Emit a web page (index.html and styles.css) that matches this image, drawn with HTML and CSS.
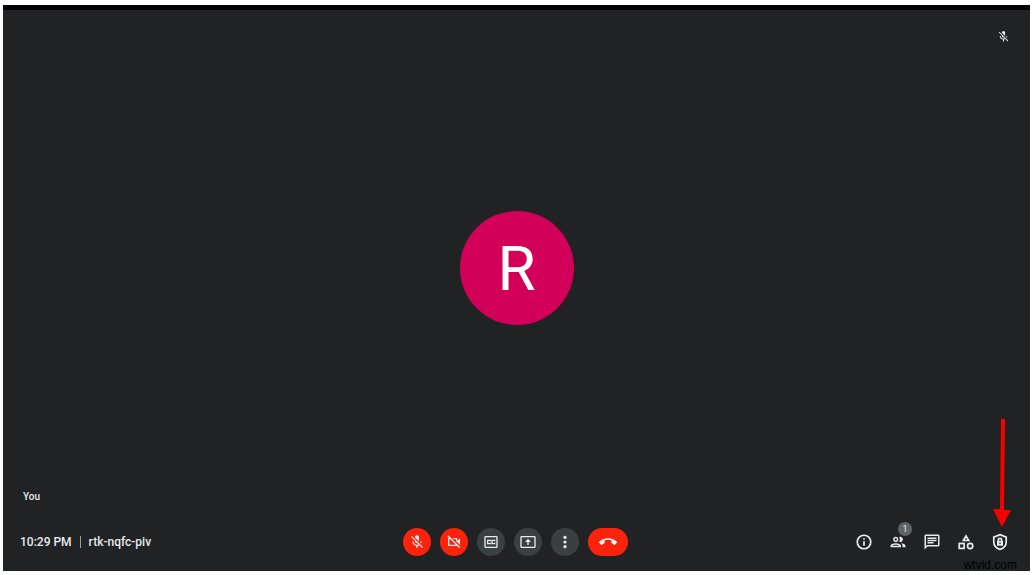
FILE: index.html
```
<!DOCTYPE html>
<html lang="en">
<head>
    <meta charset="UTF-8">
    <meta name="viewport" content="width=device-width, initial-scale=1.0">
    <title>Meet - rtk-nqfc-piv</title>
    <link rel="stylesheet" href="styles.css">
</head>
<body>
    <div class="meeting">
        <main class="stage">
            <div class="stage-top">
                <svg class="muted-icon" viewBox="0 0 24 24" role="img" aria-label="Muted"><path d="M19 11h-1.7c0 .74-.16 1.43-.43 2.05l1.23 1.23c.56-.98.9-2.09.9-3.28zm-4.02.17c0-.06.02-.11.02-.17V5c0-1.66-1.34-3-3-3S9 3.34 9 5v.18l5.98 5.99zM4.27 3L3 4.27l6.01 6.01V11c0 1.66 1.33 3 2.99 3 .22 0 .44-.03.65-.08l1.66 1.66c-.71.33-1.5.52-2.31.52-2.76 0-5.3-2.1-5.3-5.1H5c0 3.41 2.72 6.23 6 6.72V21h2v-3.28c.91-.13 1.77-.45 2.54-.9L19.73 21 21 19.73 4.27 3z"/></svg>
            </div>
            <div class="stage-middle">
                <div class="avatar">R</div>
            </div>
            <div class="name">You</div>
        </main>

        <footer class="bar">
            <div class="details">
                <span>10:29 PM</span>
                <span class="divider"></span>
                <span>rtk-nqfc-piv</span>
            </div>

            <div class="controls">
                <button class="round red" aria-label="Turn on microphone">
                    <svg viewBox="0 0 24 24"><path d="M19 11h-1.7c0 .74-.16 1.43-.43 2.05l1.23 1.23c.56-.98.9-2.09.9-3.28zm-4.02.17c0-.06.02-.11.02-.17V5c0-1.66-1.34-3-3-3S9 3.34 9 5v.18l5.98 5.99zM4.27 3L3 4.27l6.01 6.01V11c0 1.66 1.33 3 2.99 3 .22 0 .44-.03.65-.08l1.66 1.66c-.71.33-1.5.52-2.31.52-2.76 0-5.3-2.1-5.3-5.1H5c0 3.41 2.72 6.23 6 6.72V21h2v-3.28c.91-.13 1.77-.45 2.54-.9L19.73 21 21 19.73 4.27 3z"/></svg>
                </button>
                <button class="round red" aria-label="Turn on camera">
                    <svg viewBox="0 0 24 24"><path d="M9.56 8l-2-2-4.15-4.14L2 3.27 4.73 6H4c-.55 0-1 .45-1 1v10c0 .55.45 1 1 1h12c.21 0 .39-.08.55-.18L19.73 21l1.41-1.41-8.86-8.86L9.56 8zM5 16V8h1.73l8 8H5zm10-8v2.61l6 6V6.5l-4 4V7c0-.55-.45-1-1-1h-5.61l2 2H15z"/></svg>
                </button>
                <button class="round" aria-label="Turn on captions">
                    <svg class="line" viewBox="0 0 24 24"><rect x="3" y="4" width="18" height="16" rx="1"/><path d="M11 10.8V9.5H7v5h4v-1.300M17.500 10.800V9.500h-4v5h4v-1.300"/></svg>
                </button>
                <button class="round" aria-label="Present now">
                    <svg class="line wide" viewBox="0 0 24 24"><rect x="1.5" y="4" width="21" height="16" rx="1"/><path d="M12 16.5V10"/><path class="solid" d="M12 7l4.500 5h-9z"/></svg>
                </button>
                <button class="round" aria-label="More options">
                    <svg viewBox="0 0 24 24"><circle cx="12" cy="5" r="2.4"/><circle cx="12" cy="12" r="2.4"/><circle cx="12" cy="19" r="2.4"/></svg>
                </button>
                <button class="round red leave" aria-label="Leave call">
                    <svg viewBox="0 0 24 24"><path d="M12 9c-1.6 0-3.15.25-4.6.72v3.1c0 .39-.23.74-.56.9-.98.49-1.87 1.12-2.66 1.85-.18.18-.43.28-.7.28-.28 0-.53-.11-.71-.29L.29 13.08c-.18-.17-.29-.42-.29-.7 0-.28.11-.53.29-.71C3.34 8.78 7.46 7 12 7s8.66 1.78 11.71 4.67c.18.18.29.43.29.71 0 .28-.11.53-.29.71l-2.48 2.48c-.18.18-.43.29-.71.29-.27 0-.52-.11-.7-.28-.79-.74-1.69-1.36-2.67-1.85-.33-.16-.56-.5-.56-.9v-3.1C15.15 9.25 13.6 9 12 9z"/></svg>
                </button>
            </div>

            <div class="tools">
                <button class="tool" aria-label="Meeting details">
                    <svg class="line" viewBox="0 0 24 24"><circle cx="12" cy="12" r="9"/><path d="M12 11v6M12 7v2"/></svg>
                </button>
                <button class="tool" aria-label="Show everyone">
                    <svg viewBox="0 0 24 24"><path d="M9 13.75c-2.34 0-7 1.17-7 3.5V19h14v-1.75c0-2.33-4.66-3.5-7-3.5zM4.34 17c.84-.58 2.87-1.25 4.66-1.25s3.82.67 4.66 1.25H4.34zM9 12c1.93 0 3.5-1.57 3.5-3.5S10.93 5 9 5 5.5 6.57 5.5 8.5 7.07 12 9 12zm0-5c.83 0 1.5.67 1.5 1.5S9.83 10 9 10s-1.5-.67-1.5-1.5S8.17 7 9 7zm7.04 6.81c1.16.84 1.96 1.96 1.96 3.44V19h4v-1.75c0-2.02-3.5-3.17-5.96-3.44zM15 12c1.93 0 3.5-1.57 3.5-3.5S16.93 5 15 5c-.54 0-1.04.13-1.5.35.63.89 1 1.98 1 3.15s-.37 2.26-1 3.15c.46.22.96.35 1.5.35z"/></svg>
                    <span class="badge">1</span>
                </button>
                <button class="tool" aria-label="Chat">
                    <svg viewBox="0 0 24 24"><path d="M4 4h16v12H5.17L4 17.17V4m0-2c-1.1 0-1.99.9-1.99 2L2 22l4-4h14c1.1 0 2-.9 2-2V4c0-1.1-.9-2-2-2H4zm2 10h8v2H6v-2zm0-3h12v2H6V9zm0-3h12v2H6V6z"/></svg>
                </button>
                <button class="tool" aria-label="Activities">
                    <svg class="line" viewBox="0 0 24 24"><path d="M12 4l3.500 6h-7z"/><rect x="3" y="14" width="6.5" height="6.5"/><circle cx="17.5" cy="17.3" r="3.5"/></svg>
                </button>
                <button class="tool" aria-label="Host controls">
                    <svg class="line" viewBox="0 0 24 24"><path d="M12 2.2l8.3 3.3v6c0 5-3.500 8.800-8.300 10.400-4.800-1.600-8.300-5.400-8.300-10.400v-6z"/><path d="M9.800 11V9.300a2.200 2.200 0 0 1 4.400 0V11"/><path class="solid" fill-rule="evenodd" d="M8 10.500h8V17H8zm4 2.200a1.100 1.100 0 1 0 0 2.200 1.100 1.100 0 0 0 0-2.200z"/></svg>
                </button>
            </div>
        </footer>

        <!-- Arrow pointing at the host controls button -->
        <svg class="arrow" viewBox="0 0 18 108" aria-hidden="true"><path d="M8 0h4l-1 91h7L9 108 0 90h7z"/></svg>
        <span class="watermark">wtvid.com</span>
    </div>
</body>
</html>
```
FILE: styles.css
```
* {
    box-sizing: border-box;
    margin: 0;
    padding: 0;
}

body {
    display: flex;
    min-height: 100vh;
    padding: 5px 5px 4px 3px;
    background-color: #fff;
    font-family: Roboto, Arial, sans-serif;
    color: #e8eaed;
}

.meeting {
    position: relative;
    flex: 1;
    display: flex;
    flex-direction: column;
    border-top: 5px solid #000;
    background-color: #202223;
}

svg {
    display: block;
    fill: currentColor;
}

.line {
    fill: none;
    stroke: currentColor;
    stroke-width: 2;
}

.solid {
    fill: currentColor;
    stroke: none;
}

/* Video area */
.stage {
    flex: 1;
    display: flex;
    flex-direction: column;
    padding: 20px 20px 10px;
}

.stage-top {
    display: flex;
    justify-content: flex-end;
}

.muted-icon {
    width: 13px;
    height: 13px;
}

.stage-middle {
    flex: 1;
    display: flex;
    align-items: center;
    justify-content: center;
    padding-top: 2px;
}

.avatar {
    width: 114px;
    height: 114px;
    border-radius: 50%;
    background-color: #d3005a;
    color: #fff;
    font-size: 62px;
    line-height: 116px;
    text-align: center;
}

.name {
    font-size: 10px;
    font-weight: 500;
    line-height: 12px;
}

/* Bottom bar */
.bar {
    display: grid;
    grid-template-columns: 1fr auto 1fr;
    align-items: center;
    height: 58px;
    padding: 0 20px 0 17px;
}

.details {
    display: flex;
    align-items: center;
    gap: 8px;
    font-size: 12px;
    font-weight: 500;
}

.divider {
    width: 1px;
    height: 12px;
    background-color: #9aa0a6;
}

.controls {
    display: flex;
    gap: 9px;
}

button {
    border: none;
    color: inherit;
    font: inherit;
    cursor: pointer;
}

.round {
    display: flex;
    align-items: center;
    justify-content: center;
    width: 28px;
    height: 28px;
    border-radius: 14px;
    background-color: #3a4042;
}

.round svg {
    width: 16px;
    height: 16px;
}

.round .wide {
    width: 18px;
}

.red {
    background-color: #fb230b;
}

.leave {
    width: 40px;
    color: #fff;
}

.leave svg {
    width: 18px;
    height: 18px;
}

.tools {
    display: flex;
    justify-content: flex-end;
    gap: 14px;
}

.tool {
    position: relative;
    width: 20px;
    height: 20px;
    padding: 1px;
    background: none;
}

.tool svg {
    width: 18px;
    height: 18px;
}

.tool .line {
    stroke-width: 2.3;
}

.badge {
    position: absolute;
    top: -10px;
    right: -4px;
    width: 14px;
    height: 14px;
    border-radius: 50%;
    background-color: #5f6368;
    font-size: 9px;
    line-height: 14px;
}

.arrow {
    position: absolute;
    right: 19px;
    bottom: 44px;
    width: 18px;
    height: 108px;
    fill: #f80000;
}

.watermark {
    position: absolute;
    right: 13px;
    bottom: -1px;
    color: #000;
    font-family: "Liberation Sans", Arial, sans-serif;
    font-size: 12px;
    line-height: 14px;
}
```
